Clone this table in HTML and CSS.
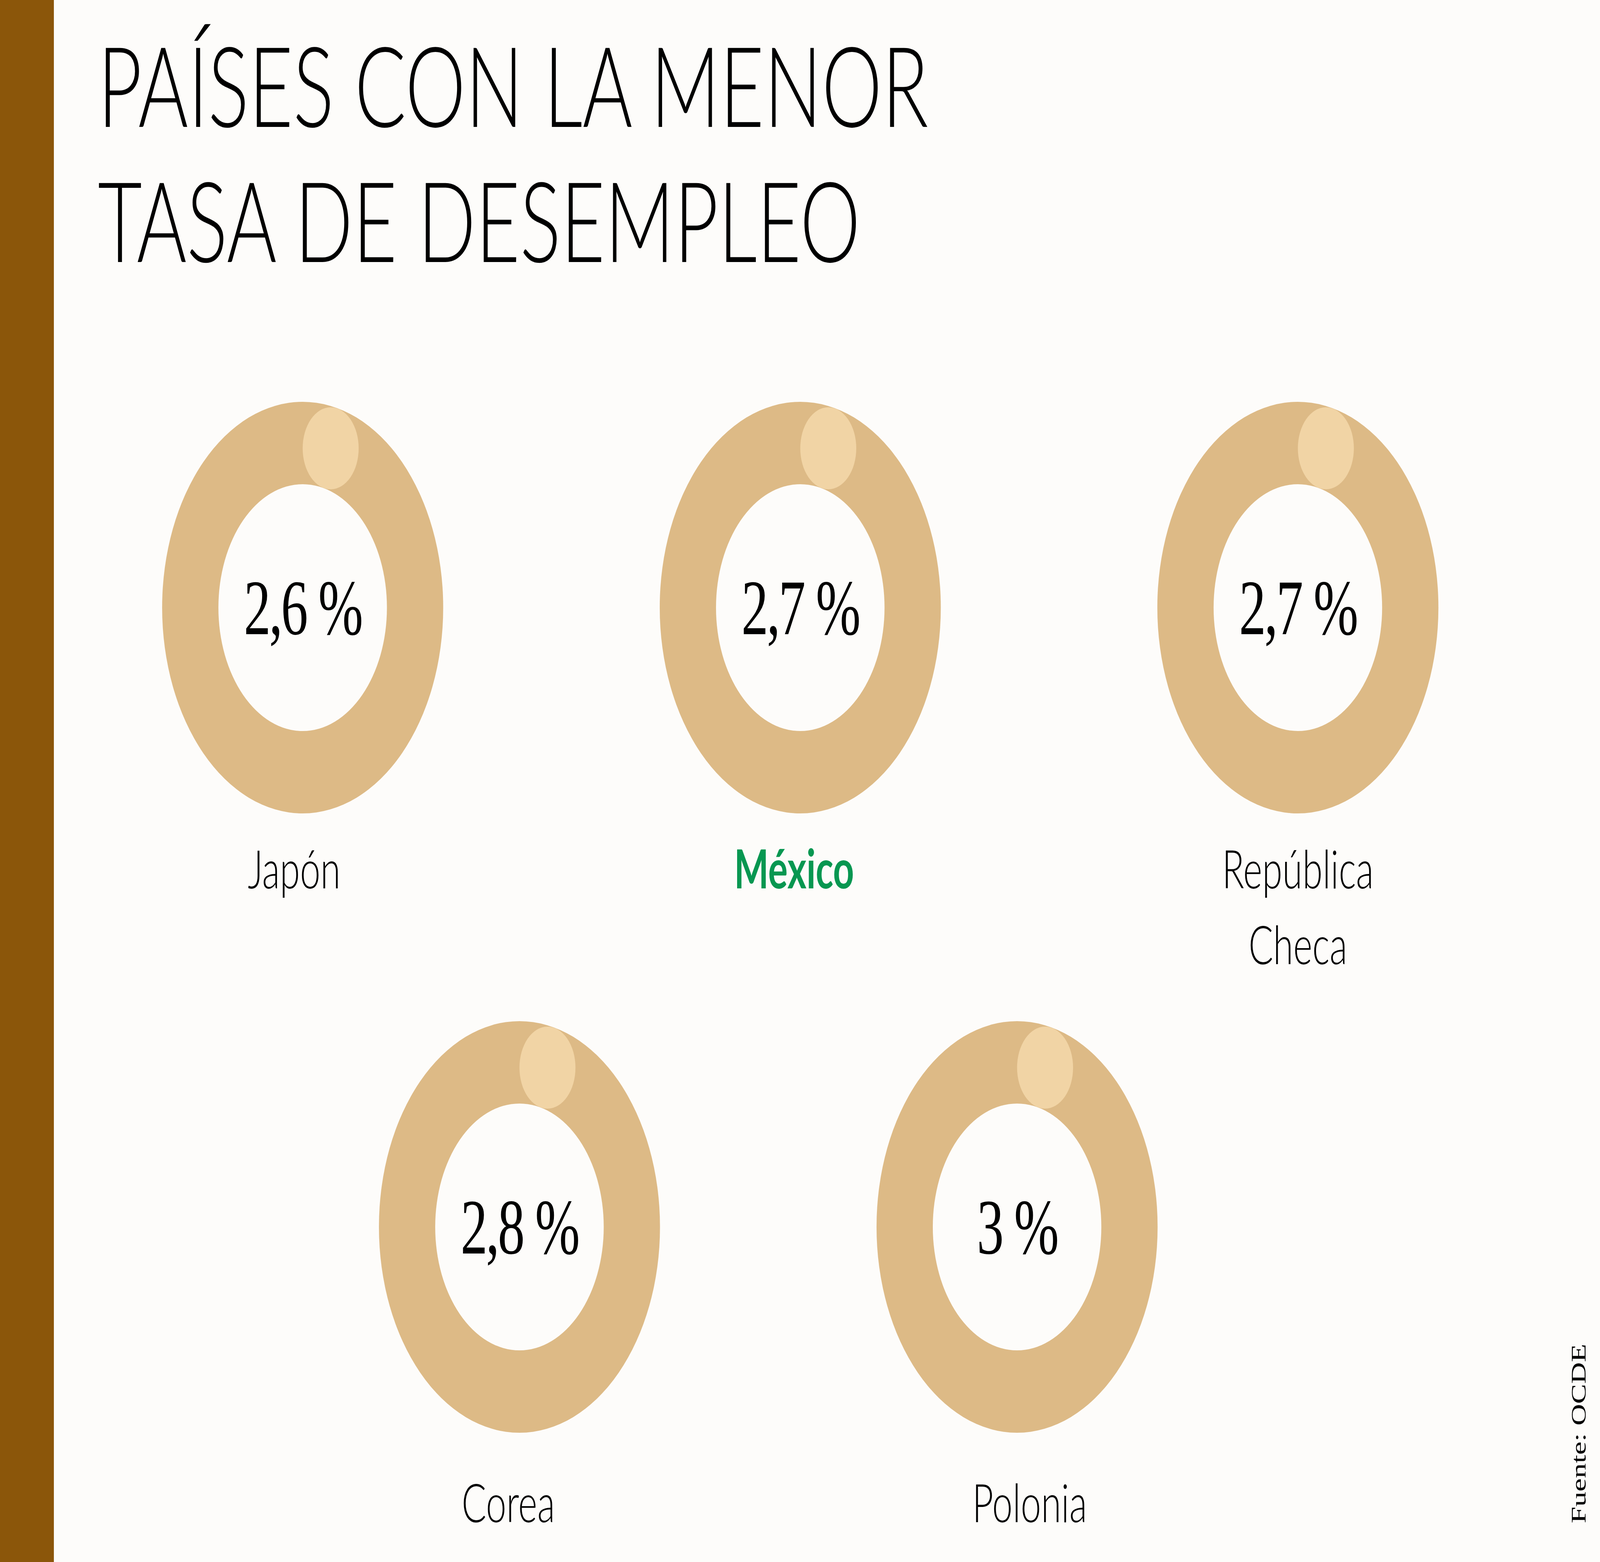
FILE: index.html
```html
<!DOCTYPE html>
<html lang="es">
<head>
<meta charset="utf-8">
<title>Países con la menor tasa de desempleo</title>
<link rel="stylesheet" href="styles.css">
</head>
<body>
<div class="frame">
<div class="page">
  <div class="side-bar"></div>
  <main class="content">
    <h1 class="title">PAÍSES CON LA MENOR<br>TASA DE DESEMPLEO</h1>
    <section class="row row--top">
      <div class="item">
        <div class="donut"><span class="dot"></span><div class="hole"><span class="value">2,6 %</span></div></div>
        <p class="label label--l32">Japón</p>
      </div>
      <div class="item">
        <div class="donut"><span class="dot"></span><div class="hole"><span class="value">2,7 %</span></div></div>
        <p class="label label--bold label--l24">México</p>
      </div>
      <div class="item">
        <div class="donut"><span class="dot"></span><div class="hole"><span class="value">2,7 %</span></div></div>
        <p class="label">República<br>Checa</p>
      </div>
    </section>
    <section class="row row--bottom">
      <div class="item">
        <div class="donut"><span class="dot"></span><div class="hole"><span class="value">2,8 %</span></div></div>
        <p class="label label--low label--l42">Corea</p>
      </div>
      <div class="item">
        <div class="donut"><span class="dot"></span><div class="hole"><span class="value">3 %</span></div></div>
        <p class="label label--low label--r47">Polonia</p>
      </div>
    </section>
  </main>
  <p class="source">Fuente: OCDE</p>
</div>
</div>
</body>
</html>
```
FILE: styles.css
```css
html, body {
  margin: 0;
  padding: 0;
  background: #fdfcfa;
  overflow: hidden;
}

.frame {
  width: 100vw;
  height: 100vh;
  overflow: hidden;
}

.page {
  position: relative;
  width: 6000px;
  height: 4000px;
  display: flex;
  background: #fdfcfa;
  overflow: hidden;
  transform-origin: 0 0;
}

/* the capture window is narrower than the 6000px artboard: fit it horizontally */
@media (max-width: 5999px) {
  .page {
    transform: scaleX(0.682667);
  }
}

.side-bar {
  width: 202px;
  flex: none;
  background: #8b560a;
}

.content {
  flex: 1;
  display: flex;
  flex-direction: column;
}

.title {
  margin: 0;
  padding: 42px 0 0 165px;
  font-family: Lato, "Liberation Sans", sans-serif;
  font-weight: 300;
  font-size: 286px;
  line-height: 346px;
  color: #000;
}

.row {
  display: flex;
}

.row--top {
  margin-top: 295px;
}

.row--bottom {
  margin-top: 102px;
  padding-left: 813px;
}

.item {
  width: 1866px;
  display: flex;
  flex-direction: column;
  align-items: center;
}

.donut {
  position: relative;
  width: 1054px;
  height: 1054px;
  border-radius: 50%;
  background: #ddba86;
  display: flex;
  align-items: center;
  justify-content: center;
}

.dot {
  position: absolute;
  left: 527px;
  top: 14px;
  width: 210px;
  height: 210px;
  border-radius: 50%;
  background: #f1d4a5;
}

.hole {
  width: 632px;
  height: 632px;
  border-radius: 50%;
  background: #fdfcfa;
  display: flex;
  align-items: center;
  justify-content: center;
}

.value {
  font-family: "Liberation Serif", serif;
  font-size: 202px;
  letter-spacing: -6px;
  color: #000;
  white-space: nowrap;
}

.label {
  margin: 42px 0 0;
  font-family: Lato, "Liberation Sans", sans-serif;
  font-weight: 300;
  font-size: 137px;
  line-height: 194px;
  text-align: center;
  color: #000;
}

.label--low {
  margin-top: 79px;
}

.label--bold {
  font-weight: 700;
  color: #079751;
}

.label--l24 { padding-right: 46px; }
.label--l32 { padding-right: 64px; }
.label--l42 { padding-right: 84px; }
.label--r47 { padding-left: 94px; }

.source {
  position: absolute;
  left: 5882px;
  top: 3901px;
  margin: 0;
  transform-origin: left top;
  transform: rotate(-90deg);
  font-family: "Liberation Serif", serif;
  font-size: 77px;
  line-height: 77px;
  color: #000;
  white-space: nowrap;
}
```
